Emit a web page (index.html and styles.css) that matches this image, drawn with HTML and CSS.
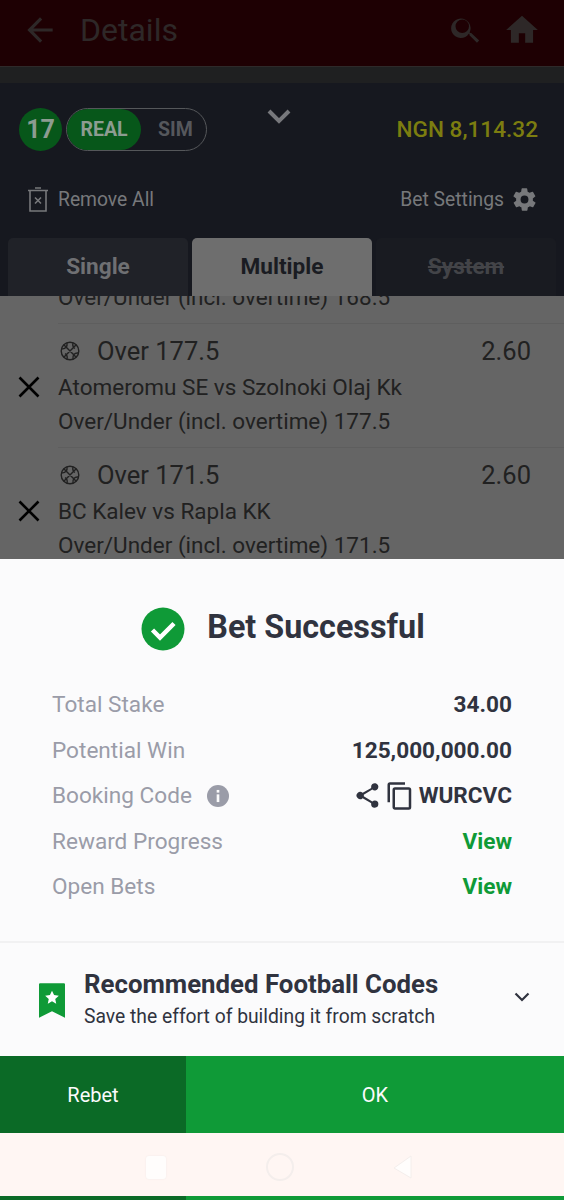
FILE: index.html
```html
<!DOCTYPE html>
<html lang="en">
<head>
  <meta charset="UTF-8" />
  <meta name="viewport" content="width=device-width, initial-scale=1.0" />
  <title>Bet Successful</title>
  <link rel="stylesheet" href="styles.css">
</head>
<body>
  <header class="topbar">
    <svg class="back-icon" viewBox="0 0 24 24"><path d="M20 11H7.800l5.600-5.600L12 4l-8 8 8 8 1.400-1.400L7.800 13H20z"/></svg>
    <h1 class="topbar-title">Details</h1>
    <svg class="search-icon" viewBox="0 0 24 24"><path d="M15.500 14h-.8l-.3-.3A6.500 6.500 0 1 0 14 14.400l.3.3v.8l5 5 1.500-1.500zm-6 0a4.500 4.500 0 1 1 0-9 4.500 4.500 0 0 1 0 9z"/></svg>
    <svg class="home-icon" viewBox="0 0 24 24"><path d="M10 20v-6h4v6h5v-8h3L12 3 2 12h3v8z"/></svg>
  </header>
  <div class="strip"></div>

  <section class="slip">
    <div class="slip-top">
      <span class="count">17</span>
      <div class="mode">
        <span class="mode-on">REAL</span>
        <span class="mode-off">SIM</span>
      </div>
      <svg class="collapse" viewBox="0 0 26 18"><path d="M3 3l10 10L23 3"/></svg>
      <span class="balance">NGN 8,114.32</span>
    </div>
    <div class="slip-actions">
      <div class="action">
        <svg class="trash" viewBox="0 0 22 26"><path d="M1 4h20M8 1.500h6M3 4v20.500h16V4M8 11l6 6M14 11l-6 6"/></svg>
        <span>Remove All</span>
      </div>
      <div class="action">
        <span>Bet Settings</span>
        <svg class="gear" viewBox="0 0 24 24"><path d="M19.400 13a7.500 7.500 0 0 0 0-2l2.100-1.600a.5.5 0 0 0 .1-.6l-2-3.500a.5.5 0 0 0-.6-.2l-2.500 1a7.300 7.300 0 0 0-1.700-1l-.4-2.700a.5.5 0 0 0-.5-.4h-4a.5.5 0 0 0-.5.4l-.4 2.700a7.300 7.300 0 0 0-1.700 1l-2.500-1a.5.5 0 0 0-.6.2l-2 3.500a.5.5 0 0 0 .1.600L4.600 11a7.500 7.500 0 0 0 0 2l-2.100 1.600a.5.5 0 0 0-.1.600l2 3.500a.5.5 0 0 0 .6.2l2.500-1a7.300 7.300 0 0 0 1.700 1l.4 2.700a.5.5 0 0 0 .5.4h4a.5.5 0 0 0 .5-.4l.4-2.700a7.300 7.300 0 0 0 1.700-1l2.500 1a.5.5 0 0 0 .6-.2l2-3.500a.5.5 0 0 0-.1-.6zM12 15.500a3.500 3.500 0 1 1 0-7 3.500 3.500 0 0 1 0 7z"/></svg>
      </div>
    </div>
    <div class="tabs">
      <div class="tab">Single</div>
      <div class="tab tab-active">Multiple</div>
      <div class="tab tab-off">System</div>
    </div>
  </section>

  <section class="bets">
    <div class="bets-inner">
      <div class="bet bet-cut">
        <div class="bet-line">Over/Under (incl. overtime) 168.5</div>
      </div>
      <div class="bet">
        <svg class="remove" viewBox="0 0 22 22"><path d="M1.500 1.500l19 19M20.500 1.500l-19 19"/></svg>
        <div class="bet-head">
          <svg class="ball" viewBox="0 0 20 20"><circle cx="10" cy="10" r="8.800"/><path d="M3.800 3.800l12.400 12.400M16.200 3.800L3.800 16.200M7 1.800c.6 3.500-1.500 6.500-5.200 6M18.200 12c-3.700-.5-5.800 2.500-5.200 6M13 1.800c-.6 2.500.2 4.500 2 5.600M7 18.200c.6-2.500-.2-4.500-2-5.600"/></svg>
          <span class="bet-pick">Over 177.5</span>
          <span class="bet-odds">2.60</span>
        </div>
        <div class="bet-line">Atomeromu SE vs Szolnoki Olaj Kk</div>
        <div class="bet-line">Over/Under (incl. overtime) 177.5</div>
      </div>
      <div class="bet">
        <svg class="remove" viewBox="0 0 22 22"><path d="M1.500 1.500l19 19M20.500 1.500l-19 19"/></svg>
        <div class="bet-head">
          <svg class="ball" viewBox="0 0 20 20"><circle cx="10" cy="10" r="8.800"/><path d="M3.800 3.800l12.400 12.400M16.200 3.800L3.800 16.200M7 1.800c.6 3.500-1.500 6.500-5.200 6M18.200 12c-3.700-.5-5.800 2.500-5.200 6M13 1.800c-.6 2.500.2 4.500 2 5.600M7 18.200c.6-2.500-.2-4.500-2-5.600"/></svg>
          <span class="bet-pick">Over 171.5</span>
          <span class="bet-odds">2.60</span>
        </div>
        <div class="bet-line">BC Kalev vs Rapla KK</div>
        <div class="bet-line">Over/Under (incl. overtime) 171.5</div>
      </div>
    </div>
  </section>

  <section class="sheet">
    <div class="sheet-title">
      <svg class="check" viewBox="0 0 44 44"><circle cx="22" cy="22" r="21.500"/><path d="M11.500 23l7.500 7.500 14-14"/></svg>
      <h2>Bet Successful</h2>
    </div>
    <div class="rows">
      <div class="row"><span class="row-label">Total Stake</span><span class="row-value">34.00</span></div>
      <div class="row"><span class="row-label">Potential Win</span><span class="row-value">125,000,000.00</span></div>
      <div class="row">
        <span class="row-label">Booking Code
          <svg class="info" viewBox="0 0 20 20"><circle cx="10" cy="10" r="10"/><rect x="8.800" y="8.500" width="2.400" height="7"/><rect x="8.800" y="4.500" width="2.400" height="2.400"/></svg>
        </span>
        <span class="row-value code">
          <svg class="share" viewBox="0 0 24 24"><path d="M18 16.100c-.8 0-1.500.3-2 .8l-7.100-4.200c.1-.2.100-.5.100-.7s0-.5-.1-.7L16 7.100a3 3 0 1 0-1-2.100c0 .2 0 .5.100.7L8 9.800a3 3 0 1 0 0 4.400l7.100 4.200c-.1.200-.1.400-.1.600a3 3 0 1 0 3-2.900z"/></svg>
          <svg class="copy" viewBox="0 0 24 24"><path d="M16 1H4a2 2 0 0 0-2 2v14h2V3h12zm3 4H8a2 2 0 0 0-2 2v14c0 1.100.9 2 2 2h11a2 2 0 0 0 2-2V7a2 2 0 0 0-2-2zm0 16H8V7h11z"/></svg>
          WURCVC
        </span>
      </div>
      <div class="row"><span class="row-label">Reward Progress</span><span class="row-value link">View</span></div>
      <div class="row"><span class="row-label">Open Bets</span><span class="row-value link">View</span></div>
    </div>
    <div class="codes">
      <svg class="bookmark" viewBox="0 0 24 32"><path d="M1 0h22a1 1 0 0 1 1 1v31l-12-6-12 6V1a1 1 0 0 1 1-1z"/><path class="star" d="M12 7l1.900 4 4.400.5-3.300 3 .9 4.400-3.900-2.200-3.900 2.200.9-4.400-3.300-3 4.400-.5z"/></svg>
      <div class="codes-text">
        <h3>Recommended Football Codes</h3>
        <p>Save the effort of building it from scratch</p>
      </div>
      <svg class="codes-arrow" viewBox="0 0 16 10"><path d="M1.500 1.500L8 8l6.500-6.500"/></svg>
    </div>
    <div class="buttons">
      <button class="btn btn-rebet">Rebet</button>
      <button class="btn btn-ok">OK</button>
    </div>
  </section>

  <nav class="navbar">
    <span class="nav-square"></span>
    <span class="nav-circle"></span>
    <svg class="nav-back" viewBox="0 0 20 24"><path d="M18 1v22L1 13z"/></svg>
  </nav>
  <div class="edge">
    <span class="edge-dark"></span>
    <span class="edge-green"></span>
  </div>
</body>
</html>
```

FILE: styles.css
```css
* {
  box-sizing: border-box;
}

html, body {
  margin: 0;
  padding: 0;
}

body {
  width: 564px;
  height: 1200px;
  overflow: hidden;
  display: flex;
  flex-direction: column;
  font-family: Roboto, "Liberation Sans", sans-serif;
  background: #fff6f3;
}

h1, h2, h3, p {
  margin: 0;
}

/* top bar */
.topbar {
  height: 67px;
  flex: none;
  display: flex;
  align-items: center;
  padding: 0 23px 6px 21px;
  background: #1e0003;
  border-bottom: 1px solid #2e2a2a;
}

.back-icon, .search-icon, .home-icon {
  fill: #2e2828;
}

.back-icon {
  width: 38px;
  height: 38px;
}

.topbar-title {
  flex: 1;
  margin-left: 21px;
  font-size: 32px;
  font-weight: 400;
  color: #2e2828;
}

.search-icon {
  width: 36px;
  height: 36px;
  margin-right: 19px;
}

.home-icon {
  width: 38px;
  height: 38px;
}

.strip {
  height: 16px;
  flex: none;
  background: #1f2021;
}

/* bet slip header */
.slip {
  height: 213px;
  flex: none;
  display: flex;
  flex-direction: column;
  background: #16181f;
}

.slip-top {
  position: relative;
  display: flex;
  align-items: center;
  height: 43px;
  margin-top: 25px;
  padding: 0 26px 0 19px;
}

.count {
  width: 43px;
  height: 43px;
  border-radius: 50%;
  display: flex;
  align-items: center;
  justify-content: center;
  background: #07571a;
  color: #8d9c91;
  font-size: 25px;
  font-weight: 700;
}

.mode {
  width: 141px;
  height: 43px;
  margin-left: 4px;
  display: flex;
  align-items: center;
  border: 1px solid #55575a;
  border-radius: 22px;
  font-size: 19.500px;
  font-weight: 700;
}

.mode-on {
  width: 74px;
  height: 41px;
  display: flex;
  align-items: center;
  justify-content: center;
  border-radius: 21px;
  background: #07571a;
  color: #8d9c91;
}

.mode-off {
  margin-left: 17px;
  color: #55575c;
}

.collapse {
  position: absolute;
  left: 266px;
  top: 0;
  width: 26px;
  height: 18px;
  fill: none;
  stroke: #77787c;
  stroke-width: 4;
}

.balance {
  margin-left: auto;
  font-size: 22.600px;
  font-weight: 500;
  color: #7c7d10;
}

.slip-actions {
  display: flex;
  justify-content: space-between;
  align-items: center;
  height: 36px;
  margin-top: 30px;
  padding: 0 26px 0 27px;
  font-size: 19.300px;
  color: #77787b;
}

.action {
  display: flex;
  align-items: center;
  gap: 9px;
}

.action + .action {
  gap: 7px;
}

.trash {
  width: 22px;
  height: 27px;
  fill: none;
  stroke: #77787b;
  stroke-width: 1.600;
}

.gear {
  width: 27px;
  height: 27px;
  fill: #77787b;
}

.tabs {
  display: flex;
  gap: 4px;
  height: 58px;
  margin-top: auto;
  padding: 0 8px;
}

.tab {
  width: 180px;
  padding-top: 15px;
  border-radius: 5px 5px 0 0;
  background: #202228;
  color: #6f7073;
  text-align: center;
  font-size: 22.600px;
  font-weight: 700;
}

.tab-active {
  background: #6e6e6e;
  color: #1a1c22;
}

.tab-off {
  background: #191b21;
  color: #434448;
  text-decoration: line-through;
}

/* selections, dimmed */
.bets {
  height: 263px;
  flex: none;
  overflow: hidden;
  background: #656565;
  color: #212121;
}

.bets-inner {
  margin-top: -16px;
  padding-left: 58px;
}

.bet {
  position: relative;
  height: 124px;
  padding-top: 7px;
  border-bottom: 1px solid #5e5e5e;
}

.bet-cut {
  height: 44px;
  padding-top: 0;
}

.bet-head {
  display: flex;
  align-items: center;
  height: 39px;
  padding-right: 33px;
  font-size: 25.500px;
}

.ball {
  width: 20px;
  height: 20px;
  margin-left: 2px;
  fill: none;
  stroke: #212121;
  stroke-width: 1.400;
}

.bet-pick {
  flex: 1;
  margin-left: 17px;
}

.bet-line {
  height: 34px;
  line-height: 34px;
  font-size: 22.500px;
}

.remove {
  position: absolute;
  left: -40px;
  top: 52px;
  width: 22px;
  height: 22px;
  fill: none;
  stroke: #000000;
  stroke-width: 2.600;
}

/* success sheet */
.sheet {
  height: 574px;
  flex: none;
  display: flex;
  flex-direction: column;
  background: #fbfbfc;
}

.sheet-title {
  display: flex;
  align-items: center;
  justify-content: center;
  gap: 22px;
  height: 44px;
  margin-top: 48px;
  padding-left: 2px;
}

.check {
  width: 44px;
  height: 44px;
}

.check circle {
  fill: #0f9a37;
}

.check path {
  fill: none;
  stroke: #ffffff;
  stroke-width: 4.500;
}

.sheet-title h2 {
  margin-top: -4px;
  font-size: 32.300px;
  font-weight: 700;
  color: #30333f;
}

.rows {
  display: flex;
  flex-direction: column;
  margin-top: 31px;
  padding: 0 52px;
}

.row {
  display: flex;
  justify-content: space-between;
  align-items: center;
  height: 45.500px;
  font-size: 22.600px;
}

.row-label {
  display: flex;
  align-items: center;
  color: #9a9ca8;
}

.info {
  width: 22px;
  height: 22px;
  margin-left: 15px;
  fill: #9a9ca8;
}

.info rect {
  fill: #fbfbfc;
}

.row-value {
  font-weight: 700;
  color: #30333f;
}

.code {
  display: flex;
  align-items: center;
}

.share {
  width: 29px;
  height: 29px;
  fill: #30333f;
}

.copy {
  width: 30px;
  height: 30px;
  margin-left: 3px;
  margin-right: 4px;
  fill: #30333f;
}

.link {
  color: #0f9a37;
}

.codes {
  display: flex;
  align-items: center;
  height: 115px;
  margin-top: auto;
  padding: 0 34px 0 39px;
  border-top: 2px solid #f1f1f2;
}

.bookmark {
  width: 26px;
  height: 35px;
  margin-top: 2px;
  fill: #0f9a37;
}

.bookmark .star {
  fill: #ffffff;
}

.codes-text {
  flex: 1;
  margin-left: 19px;
}

.codes-text h3 {
  font-size: 25.800px;
  font-weight: 700;
  line-height: 32px;
  color: #30333f;
}

.codes-text p {
  margin-top: 3px;
  font-size: 19.300px;
  line-height: 28px;
  color: #30333f;
}

.codes-arrow {
  width: 16px;
  height: 10px;
  margin-bottom: 6px;
  fill: none;
  stroke: #30333f;
  stroke-width: 2.200;
}

.buttons {
  display: flex;
  height: 77px;
  flex: none;
}

.btn {
  border: none;
  padding: 0;
  color: #fbfbfc;
  font-family: inherit;
  font-size: 20px;
}

.btn-rebet {
  width: 186px;
  background: #0b6a26;
}

.btn-ok {
  flex: 1;
  background: #0f9a37;
}

/* system nav */
.navbar {
  height: 63px;
  flex: none;
  display: flex;
  align-items: center;
  justify-content: center;
  padding: 5px 6px 0 0;
  background: #fff6f3;
}

.nav-square {
  width: 20px;
  height: 23px;
  border-radius: 3px;
  background: #fffdfc;
  box-shadow: 0 0 2px #f0e9e7;
}

.nav-circle {
  width: 28px;
  height: 28px;
  margin-left: 100px;
  border-radius: 50%;
  border: 2px solid #f4eeec;
}

.nav-back {
  width: 20px;
  height: 24px;
  margin-left: 99px;
  fill: #fffdfc;
  stroke: #f4eeec;
}

.edge {
  height: 4px;
  flex: none;
  display: flex;
}

.edge-dark {
  width: 186px;
  background: #0b6a26;
}

.edge-green {
  flex: 1;
  background: #0f9a37;
}
```
